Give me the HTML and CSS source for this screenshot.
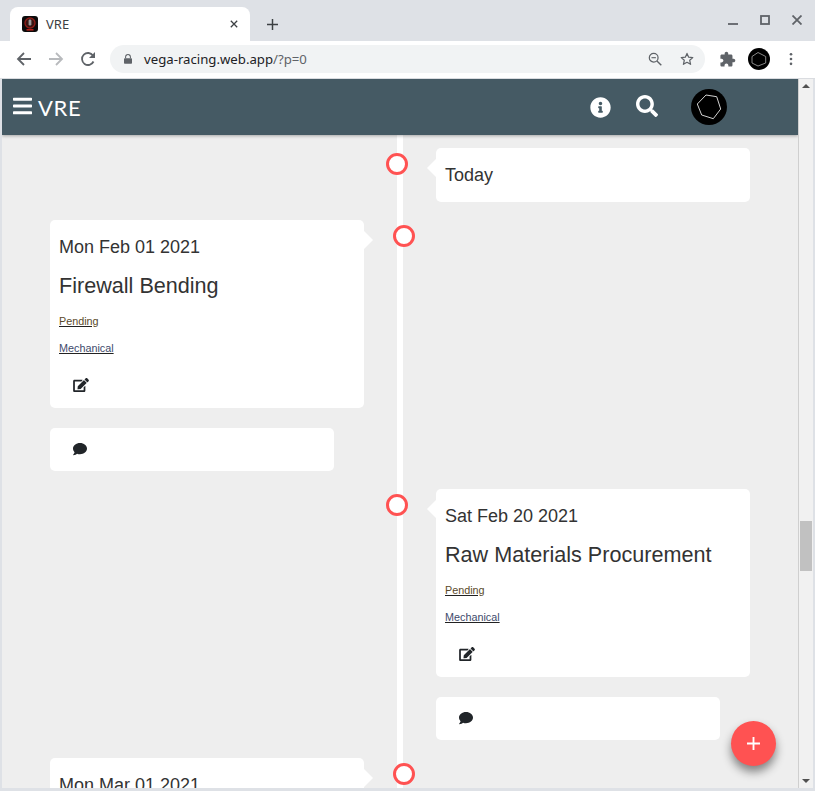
FILE: index.html
```html
<!DOCTYPE html>
<html lang="en">
<head>
<meta charset="utf-8">
<title>VRE</title>
<link rel="stylesheet" href="styles.css">
</head>
<body>
<div class="window">
  <div class="tabstrip">
    <div class="tab">
      <svg class="favicon" viewBox="0 0 16 16"><rect width="16" height="16" rx="3" fill="#0b0b0b"/><circle cx="8" cy="7" r="5" fill="#3a1512" stroke="#8e1d18" stroke-width="1.4"/><rect x="6.6" y="3.5" width="2.8" height="6" rx="1.2" fill="#9a9a9a"/><rect x="4.5" y="13" width="7" height="1.6" fill="#b3201a"/></svg>
      <span class="tab-title">VRE</span>
      <svg class="tab-close" viewBox="0 0 10 10"><path d="M1 1l8 8M9 1l-8 8" stroke="#3c4043" stroke-width="1.6" fill="none"/></svg>
    </div>
    <svg class="new-tab" viewBox="0 0 12 12"><path d="M6 0v12M0 6h12" stroke="#3c4043" stroke-width="1.6" fill="none"/></svg>
    <div class="window-controls">
      <svg class="win-btn" viewBox="0 0 10 10"><path d="M0 9h10" stroke="#5f6368" stroke-width="1.8"/></svg>
      <svg class="win-btn" viewBox="0 0 10 10"><rect x="1" y="1" width="8" height="8" fill="none" stroke="#5f6368" stroke-width="1.8"/></svg>
      <svg class="win-btn" viewBox="0 0 10 10"><path d="M.5.5l9 9M9.5.5l-9 9" stroke="#5f6368" stroke-width="1.8" fill="none"/></svg>
    </div>
  </div>
  <div class="toolbar">
    <svg class="nav-btn" viewBox="0 0 16 16"><path d="M15 8H2.5M8 2L2 8l6 6" stroke="#5f6368" stroke-width="1.8" fill="none"/></svg>
    <svg class="nav-btn" viewBox="0 0 16 16"><path d="M1 8h12.5M8 2l6 6-6 6" stroke="#b8babd" stroke-width="1.8" fill="none"/></svg>
    <svg class="nav-btn" viewBox="0 0 16 16"><path d="M13.5 10.5A6 6 0 1 1 13 4.6" stroke="#5f6368" stroke-width="1.8" fill="none"/><path d="M15 1v6H9z" fill="#5f6368"/></svg>
    <div class="omnibox">
      <svg class="lock" viewBox="0 0 10 12"><path d="M2 5V3.5a3 3 0 0 1 6 0V5" stroke="#5f6368" stroke-width="1.3" fill="none"/><rect y="5" width="10" height="7" rx="1" fill="#5f6368"/></svg>
      <span class="url"><span class="url-host">vega-racing.web.app</span>/?p=0</span>
      <svg class="omni-icon zoom-icon" viewBox="0 0 16 16"><circle cx="6.5" cy="6.5" r="5" stroke="#5f6368" stroke-width="1.4" fill="none"/><path d="M10.2 10.2l5 5" stroke="#5f6368" stroke-width="1.6"/><path d="M4 6.5h5" stroke="#5f6368" stroke-width="1.3"/></svg>
      <svg class="omni-icon star-icon" viewBox="0 0 16 16"><path d="M8 1.6l1.9 4.3 4.7.5-3.5 3.1 1 4.6L8 11.8l-4.1 2.3 1-4.6L1.4 6.4l4.7-.5z" stroke="#5f6368" stroke-width="1.4" fill="none" stroke-linejoin="round"/></svg>
    </div>
    <svg class="ext-icon" viewBox="0 0 24 24"><path fill="#5f6368" d="M20.5 11H19V7c0-1.1-.9-2-2-2h-4V3.5C13 2.12 11.88 1 10.5 1S8 2.12 8 3.5V5H4c-1.1 0-1.99.9-1.99 2v3.8H3.5c1.49 0 2.7 1.21 2.7 2.7s-1.21 2.7-2.7 2.7H2V20c0 1.1.9 2 2 2h3.8v-1.5c0-1.49 1.21-2.7 2.7-2.7 1.49 0 2.7 1.21 2.7 2.7V22H17c1.1 0 2-.9 2-2v-4h1.5c1.38 0 2.5-1.12 2.5-2.5S21.88 11 20.5 11z"/></svg>
    <svg class="profile" viewBox="0 0 22 22"><circle cx="11" cy="11" r="11" fill="#000"/><path d="M10 4.500l7.700 4V15L10 18l-6-3V8.500z" fill="none" stroke="#aaa" stroke-width=".8"/></svg>
    <svg class="menu-dots" viewBox="0 0 4 16"><circle cx="2" cy="2.5" r="1.5" fill="#5f6368"/><circle cx="2" cy="8" r="1.5" fill="#5f6368"/><circle cx="2" cy="13.5" r="1.5" fill="#5f6368"/></svg>
  </div>
  <div class="viewport">
    <div class="page">
      <header class="appbar">
        <svg class="bars" viewBox="0 0 448 512"><path fill="#fff" d="M16 132h416c8.837 0 16-7.163 16-16V76c0-8.837-7.163-16-16-16H16C7.163 60 0 67.163 0 76v40c0 8.837 7.163 16 16 16zm0 160h416c8.837 0 16-7.163 16-16v-40c0-8.837-7.163-16-16-16H16c-8.837 0-16 7.163-16 16v40c0 8.837 7.163 16 16 16zm0 160h416c8.837 0 16-7.163 16-16v-40c0-8.837-7.163-16-16-16H16c-8.837 0-16 7.163-16 16v40c0 8.837 7.163 16 16 16z"/></svg>
        <span class="brand">VRE</span>
        <svg class="info" viewBox="0 0 512 512"><path fill="#fff" d="M256 8C119.043 8 8 119.083 8 256c0 136.997 111.043 248 248 248s248-111.003 248-248C504 119.083 392.957 8 256 8zm0 110c23.196 0 42 18.804 42 42s-18.804 42-42 42-42-18.804-42-42 18.804-42 42-42zm56 254c0 6.627-5.373 12-12 12h-88c-6.627 0-12-5.373-12-12v-24c0-6.627 5.373-12 12-12h12v-64h-12c-6.627 0-12-5.373-12-12v-24c0-6.627 5.373-12 12-12h64c6.627 0 12 5.373 12 12v100h12c6.627 0 12 5.373 12 12v24z"/></svg>
        <svg class="search" viewBox="0 0 512 512"><path fill="#fff" d="M505 442.7L405.3 343c-4.5-4.5-10.6-7-17-7H372c27.6-35.3 44-79.7 44-128C416 93.1 322.9 0 208 0S0 93.1 0 208s93.1 208 208 208c48.3 0 92.7-16.4 128-44v16.3c0 6.4 2.5 12.5 7 17l99.7 99.7c9.4 9.4 24.6 9.4 33.9 0l28.3-28.3c9.4-9.4 9.4-24.6.1-34zM208 336c-70.7 0-128-57.2-128-128 0-70.7 57.2-128 128-128 70.7 0 128 57.2 128 128 0 70.7-57.2 128-128 128z"/></svg>
        <svg class="avatar" viewBox="0 0 36 36"><circle cx="18" cy="18" r="18" fill="#000"/><path d="M15 6l10.700 1.700 4 12.300-7.400 9.700L10.700 26 6.300 15z" fill="none" stroke="#e8e8e8" stroke-width=".9"/></svg>
      </header>
      <main class="timeline">
        <section class="entry entry-right entry-today">
          <span class="dot"></span>
          <div class="card card-main"><div class="date">Today</div></div>
        </section>
        <section class="entry entry-left">
          <span class="dot"></span>
          <article class="card card-main">
            <div class="date">Mon Feb 01 2021</div>
            <h2 class="title">Firewall Bending</h2>
            <p class="tag"><a class="tag-link tag-pending">Pending</a></p>
            <p class="tag"><a class="tag-link tag-dept">Mechanical</a></p>
            <svg class="edit" viewBox="0 0 576 512"><path fill="#212529" d="M402.6 83.2l90.2 90.2c3.8 3.8 3.8 10 0 13.8L274.4 405.6l-92.8 10.3c-12.4 1.4-22.9-9.1-21.5-21.5l10.3-92.8L388.8 83.2c3.8-3.8 10-3.8 13.8 0zm162-22.9l-48.8-48.8c-15.2-15.2-39.9-15.2-55.2 0l-35.4 35.4c-3.8 3.8-3.8 10 0 13.8l90.2 90.2c3.8 3.8 10 3.8 13.8 0l35.4-35.4c15.2-15.3 15.2-40 0-55.2zM384 346.2V448H64V128h229.8c3.2 0 6.2-1.3 8.5-3.5l40-40c7.6-7.6 2.2-20.5-8.5-20.5H48C21.5 64 0 85.5 0 112v352c0 26.5 21.5 48 48 48h352c26.5 0 48-21.5 48-48V306.2c0-10.7-12.9-16-20.5-8.5l-40 40c-2.2 2.3-3.5 5.3-3.5 8.5z"/></svg>
          </article>
          <div class="card card-comment"><svg class="comment" viewBox="0 0 512 512"><path fill="#212529" d="M256 32C114.6 32 0 125.1 0 240c0 49.6 21.4 95 57 130.7C44.5 421.1 2.7 466 2.2 466.5c-2.2 2.3-2.8 5.7-1.5 8.7S4.8 480 8 480c66.3 0 116-31.8 140.6-51.4 32.7 12.3 69 19.4 107.4 19.4 141.4 0 256-93.1 256-208S397.4 32 256 32z"/></svg></div>
        </section>
        <section class="entry entry-right">
          <span class="dot"></span>
          <article class="card card-main">
            <div class="date">Sat Feb 20 2021</div>
            <h2 class="title">Raw Materials Procurement</h2>
            <p class="tag"><a class="tag-link tag-pending">Pending</a></p>
            <p class="tag"><a class="tag-link tag-dept">Mechanical</a></p>
            <svg class="edit" viewBox="0 0 576 512"><path fill="#212529" d="M402.6 83.2l90.2 90.2c3.8 3.8 3.8 10 0 13.8L274.4 405.6l-92.8 10.3c-12.4 1.4-22.9-9.1-21.5-21.5l10.3-92.8L388.8 83.2c3.8-3.8 10-3.8 13.8 0zm162-22.9l-48.8-48.8c-15.2-15.2-39.9-15.2-55.2 0l-35.4 35.4c-3.8 3.8-3.8 10 0 13.8l90.2 90.2c3.8 3.8 10 3.8 13.8 0l35.4-35.4c15.2-15.3 15.2-40 0-55.2zM384 346.2V448H64V128h229.8c3.2 0 6.2-1.3 8.5-3.5l40-40c7.6-7.6 2.2-20.5-8.5-20.5H48C21.5 64 0 85.5 0 112v352c0 26.5 21.5 48 48 48h352c26.5 0 48-21.5 48-48V306.2c0-10.7-12.9-16-20.5-8.5l-40 40c-2.2 2.3-3.5 5.3-3.5 8.5z"/></svg>
          </article>
          <div class="card card-comment"><svg class="comment" viewBox="0 0 512 512"><path fill="#212529" d="M256 32C114.6 32 0 125.1 0 240c0 49.6 21.4 95 57 130.7C44.5 421.1 2.7 466 2.2 466.5c-2.2 2.3-2.8 5.7-1.5 8.7S4.8 480 8 480c66.3 0 116-31.8 140.6-51.4 32.7 12.3 69 19.4 107.4 19.4 141.4 0 256-93.1 256-208S397.4 32 256 32z"/></svg></div>
        </section>
        <section class="entry entry-left">
          <span class="dot"></span>
          <article class="card card-main">
            <div class="date">Mon Mar 01 2021</div>
          </article>
        </section>
      </main>
      <button class="fab" type="button"><svg viewBox="0 0 14 14"><path d="M7 0v14M0 7h14" stroke="#fff" stroke-width="2" fill="none"/></svg></button>
    </div>
    <div class="scrollbar">
      <span class="arrow-up"></span>
      <div class="track"><span class="thumb"></span></div>
      <span class="arrow-down"></span>
    </div>
  </div>
</div>
</body>
</html>
```
FILE: styles.css
```css
* { box-sizing: border-box; }
html, body { margin: 0; height: 100%; overflow: hidden; }
body { font-family: "Liberation Sans", Arial, sans-serif; color: #212529; }

.window { width: 815px; height: 791px; display: flex; flex-direction: column; background: #dee1e6; padding: 0 2px 3px; }

/* browser chrome */
.tabstrip { flex: none; height: 41px; margin: 0 -2px; padding: 7px 0 0 10px; display: flex; align-items: flex-start; }
.tab { width: 240px; height: 34px; background: #fff; border-radius: 8px 8px 0 0; display: flex; align-items: center; padding: 0 12px 0 12px; }
.favicon { width: 16px; height: 16px; flex: none; }
.tab-title { margin-left: 8px; font: 13px "Noto Sans", sans-serif; color: #3c4043; flex: 1; }
.tab-close { width: 8px; height: 8px; }
.new-tab { width: 11px; height: 11px; margin: 12px 0 0 17px; }
.window-controls { margin-left: auto; display: flex; gap: 22px; padding: 8px 13px 0 0; }
.win-btn { display: block; width: 10px; height: 10px; }
.toolbar { flex: none; height: 38px; margin: 0 -2px; padding: 0 14px 1px 16px; background: #fff; border-bottom: 1px solid #dadce0; display: flex; align-items: center; gap: 16px; }
.nav-btn { width: 16px; height: 16px; flex: none; }
.omnibox { width: 595px; height: 28px; margin-left: -2px; background: #f1f3f4; border-radius: 14px; display: flex; align-items: center; padding: 0 11px 0 14px; }
.lock { width: 8px; height: 10px; flex: none; }
.url { margin-left: 12px; font: 13.2px "Noto Sans", sans-serif; color: #5f6368; flex: 1; }
.url-host { color: #202124; }
.omni-icon { width: 14px; height: 14px; flex: none; }
.star-icon { margin-left: 18px; }
.ext-icon { width: 17px; height: 17px; margin-left: -2px; flex: none; }
.profile { width: 22px; height: 22px; margin-left: -4px; flex: none; }
.menu-dots { width: 4px; height: 14px; margin-left: 3px; flex: none; }

/* viewport */
.viewport { flex: 1; min-height: 0; display: flex; overflow: hidden; }
.page { flex: 1; min-width: 0; position: relative; overflow: hidden; background: #eee; }
.appbar { height: 56px; background: #455a64; box-shadow: 0 1px 3px rgba(0,0,0,.3); display: flex; align-items: center; padding-left: 11px; position: relative; z-index: 2; }
.bars { width: 19px; height: 22px; margin-bottom: 2px; flex: none; }
.brand { margin-left: 6px; font: 22px "Lato", sans-serif; letter-spacing: .6px; color: #fff; width: 44px; }
.info { width: 21px; height: 21px; margin-left: 508px; flex: none; }
.search { width: 22px; height: 22px; margin: 0 0 2px 25px; flex: none; }
.avatar { width: 36px; height: 36px; margin-left: 33px; flex: none; }

/* timeline */
.timeline { position: relative; padding-top: 13px; }
.timeline::before { content: ""; position: absolute; top: 0; bottom: 0; left: 395px; width: 6px; background: #fff; }
.entry { position: relative; width: 398px; margin-bottom: 18px; }
.entry-left { padding: 0 36px 0 48px; }
.entry-right { padding: 0 48px 0 36px; margin-left: 398px; }
.dot { position: absolute; top: 5px; width: 22px; height: 22px; border-radius: 50%; border: 3px solid #ff5252; background: #fff; z-index: 1; }
.entry-left .dot { right: -15px; }
.entry-right .dot { left: -14px; }

.card { background: #fff; border-radius: 5px; }
.card-main { position: relative; padding: 9px 9px 16px; }
.card-main::after { content: ""; position: absolute; top: 11px; width: 0; height: 0; border: 9px solid transparent; }
.entry-left .card-main::after { left: 100%; border-left-color: #fff; border-right-width: 0; }
.entry-right .card-main::after { right: 100%; border-right-color: #fff; border-left-width: 0; }
.date { font-size: 18px; line-height: 36px; color: #333; height: 36px; }
.entry-today .date { height: 29px; }
.title { margin: 8px 0 14px; font-size: 21.6px; font-weight: 400; line-height: 26px; color: #333; }
.tag { margin: 0 0 10px; font-size: 10.8px; line-height: 17px; height: 17px; }
.tag-link { text-decoration: underline; text-decoration-color: #222; }
.tag-pending { color: #5a4a2a; }
.tag-dept { color: #3d4a6b; }
.edit { display: block; width: 16px; height: 14px; margin: 21px 0 0 14px; }
.card-comment { width: 284px; height: 43px; margin-top: 20px; padding: 14px 0 0 23px; }
.comment { display: block; width: 14px; height: 14px; }

.fab { position: absolute; left: 729px; top: 642px; width: 45px; height: 45px; border: 0; padding: 0; border-radius: 50%; background: #ff5252; box-shadow: 0 6px 10px rgba(0,0,0,.45); display: flex; align-items: center; justify-content: center; z-index: 3; }
.fab svg { width: 13px; height: 13px; }

/* scrollbar */
.scrollbar { flex: none; width: 15px; background: #f1f1f1; border-left: 1px solid #cfcfcf; display: flex; flex-direction: column; align-items: center; }
.arrow-up { margin-top: 5px; border: 4px solid transparent; border-top: 0; border-bottom: 4px solid #505050; }
.arrow-down { margin-bottom: 5px; border: 4px solid transparent; border-bottom: 0; border-top: 4px solid #505050; }
.track { flex: 1; width: 100%; padding-top: 433px; }
.thumb { display: block; width: 12px; height: 50px; margin: 0 auto; background: #c1c1c1; }
```
